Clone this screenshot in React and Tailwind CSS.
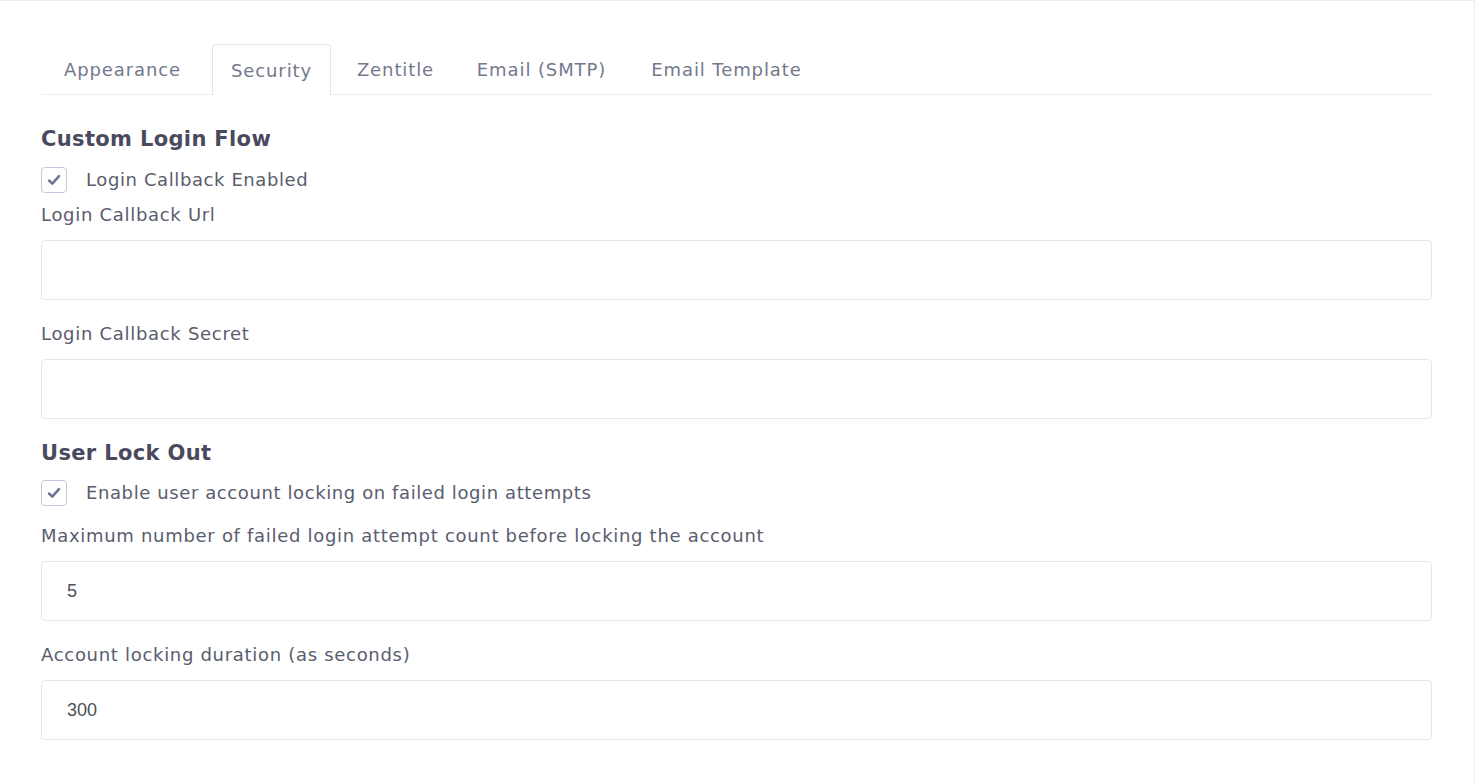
import React from "react";

const tabs = [
  { name: "Appearance", w: "w-[163px]" },
  { name: "Security", w: "w-[119px]" },
  { name: "Zentitle", w: "w-[113px]" },
  { name: "Email (SMTP)", w: "w-[163px]" },
  { name: "Email Template", w: "w-[191px]" },
];

const Check = () => (
  <span className="flex h-[26px] w-[26px] items-center justify-center rounded-[4px] border border-[#c5c8dc] bg-white">
    <svg width="14" height="12" viewBox="0 0 14 12" fill="none">
      <path d="M2 6.5 L5.3 9.6 L12 2.2" stroke="#6f7391" strokeWidth="2.5" strokeLinecap="round" strokeLinejoin="round" />
    </svg>
  </span>
);

const Field = ({ label, value, className }) => (
  <div className={className}>
    <label className="block h-6 text-[18px] leading-6 tracking-[0.7px] text-[#595d6e]">{label}</label>
    <input
      readOnly
      value={value}
      className="mt-[13px] block h-[60px] w-full rounded-[4px] border border-[#e6e7ee] bg-white px-[25px] text-[18px] tracking-normal text-[#495057] outline-none"
      style={{ fontFamily: '"Liberation Sans", Arial, sans-serif' }}
    />
  </div>
);

export default function App() {
  return (
    <div className="h-[784px] w-[1475px] border-t border-r border-[#ebedf2] bg-white pl-[41px] pt-[43px] font-['DejaVu_Sans',sans-serif]">
      <div className="w-[1391px]">
        <div className="flex h-[51px] gap-2 border-b border-[#ebedf2]">
          {tabs.map((t) => (
            <div
              key={t.name}
              className={
                t.name === "Security"
                  ? `-mb-px flex ${t.w} items-center justify-center rounded-t-[4px] border border-b-0 border-[#e2e4ec] bg-white text-[18px] tracking-[0.9px] text-[#74788d]`
                  : `flex ${t.w} items-center justify-center border border-transparent text-[18px] tracking-[0.9px] text-[#74788d]`
              }
            >
              {t.name}
            </div>
          ))}
        </div>

        <h3 className="mt-[29px] h-[30px] text-[21px] font-semibold leading-[30px] tracking-[0.35px] text-[#4a4a5e]">Custom Login Flow</h3>
        <div className="mt-[13px] flex h-[26px] items-center gap-[19px]">
          <Check />
          <span className="text-[18px] leading-6 tracking-[0.6px] text-[#595d6e]">Login Callback Enabled</span>
        </div>
        <Field className="mt-[10px]" label="Login Callback Url" value="" />
        <Field className="mt-[22px]" label="Login Callback Secret" value="" />

        <h3 className="mt-[19px] h-[30px] text-[21px] font-semibold leading-[30px] tracking-[0.35px] text-[#4a4a5e]">User Lock Out</h3>
        <div className="mt-[12px] flex h-[26px] items-center gap-[19px]">
          <Check />
          <span className="text-[18px] leading-6 tracking-[0.6px] text-[#595d6e]">Enable user account locking on failed login attempts</span>
        </div>
        <Field className="mt-[18px]" label="Maximum number of failed login attempt count before locking the account" value="5" />
        <Field className="mt-[22px]" label="Account locking duration (as seconds)" value="300" />
      </div>
    </div>
  );
}
